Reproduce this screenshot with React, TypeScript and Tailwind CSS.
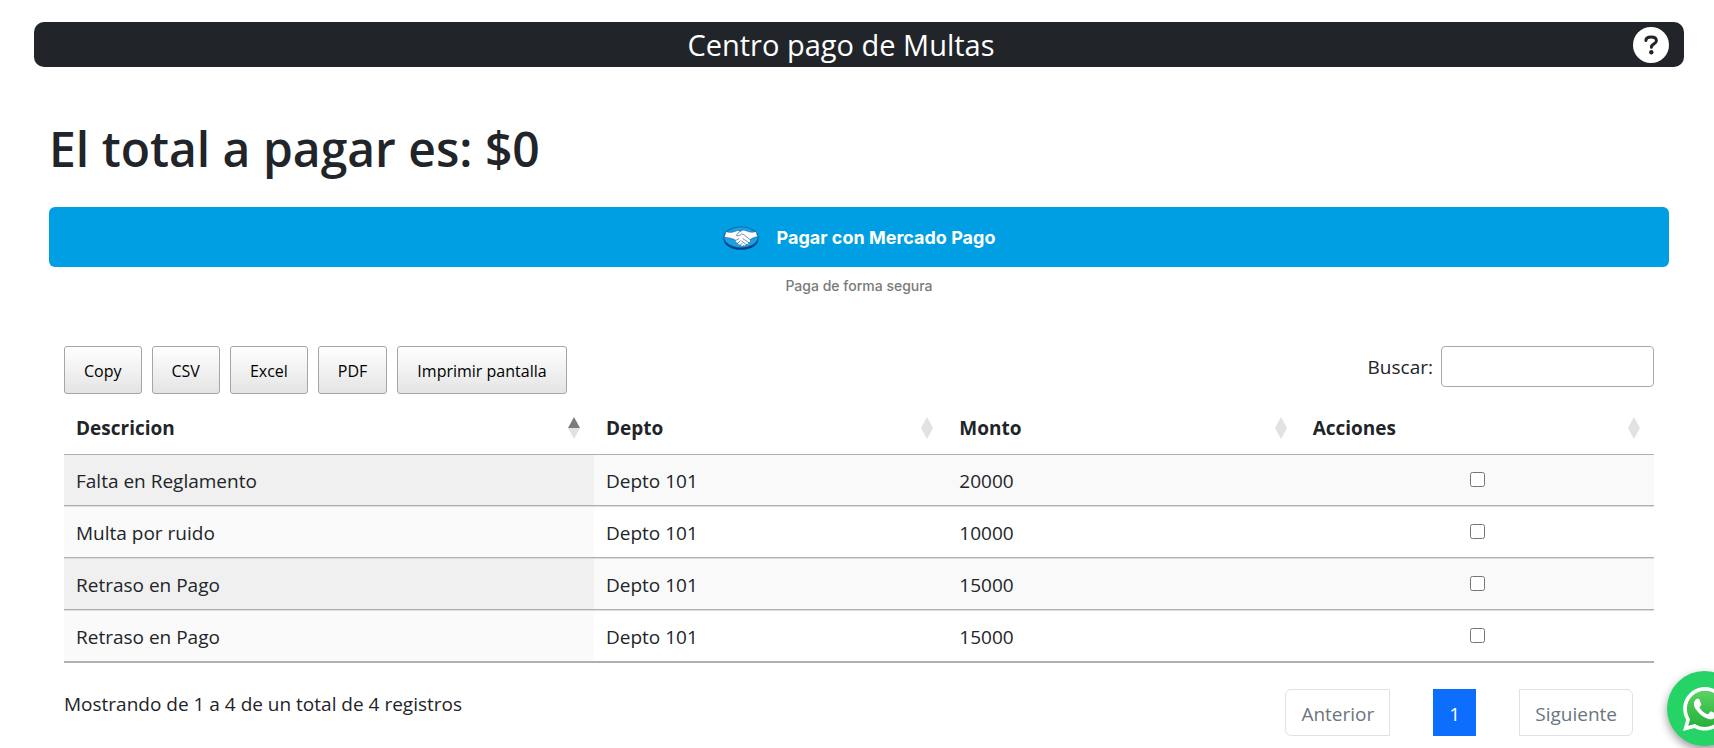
import { useState } from "react";

type Fine = { id: number; description: string; unit: string; amount: number };

const fines: Fine[] = [
  { id: 1, description: "Falta en Reglamento", unit: "Depto 101", amount: 20000 },
  { id: 2, description: "Multa por ruido", unit: "Depto 101", amount: 10000 },
  { id: 3, description: "Retraso en Pago", unit: "Depto 101", amount: 15000 },
  { id: 4, description: "Retraso en Pago", unit: "Depto 101", amount: 15000 },
];

const columns = [
  { label: "Descricion", width: "w-1/3", sorted: true },
  { label: "Depto", width: "w-2/9", sorted: false },
  { label: "Monto", width: "w-2/9", sorted: false },
  { label: "Acciones", width: "w-2/9", sorted: false },
];

const exportActions = ["Copy", "CSV", "Excel", "PDF", "Imprimir pantalla"];

function HandshakeLogo() {
  return (
    <svg className="h-6 w-9" viewBox="0 0 36 24" aria-hidden="true">
      <ellipse cx="18" cy="13" rx="17.4" ry="10.8" fill="#0a3f86" />
      <ellipse cx="18" cy="11.2" rx="17.4" ry="10.8" fill="#1c5a9c" />
      <ellipse cx="18" cy="11.2" rx="16.6" ry="10" fill="#12a5e6" />
      <path
        d="M3 5.400C6 6.800 9.500 6.600 13 4.900c1.600-.6 3-.4 4.500.3 1.600-1.300 3.600-1.500 5.600-.5 3.400 1.600 6.700 2 9.900.7l1.800 5.400c-3.200.3-5.700 1.300-7.700 2.900 1.100 1.200.4 3-1.300 3 .1 1.500-1.200 2.300-2.500 1.900-.3 1.200-1.700 1.700-2.800 1-1 1.200-2.900.7-3.300-.6-1.700.4-3-.7-2.800-2.100-1.900.3-2.900-1.500-1.900-2.800C9 12.400 5.500 11.500 1.200 11.400Z"
        fill="#fff"
        stroke="#2c5f9e"
        strokeWidth=".7"
        strokeLinejoin="round"
      />
      <path
        d="M17.500 5.200c-2 1.200-3.300 2.600-4 4.200 1.700.8 3.700 0 4.900-1.500 1.300.2 2.200.5 3 1.200l5.700 4.600M20 12.700l5.800 4M18.800 15.200l4.500 3.400M13.400 14.100l2.200-1.300M15.200 16.800l2-1.800M17.400 18.900l1.600-1.600"
        fill="none"
        stroke="#2c5f9e"
        strokeWidth=".7"
        strokeLinecap="round"
      />
    </svg>
  );
}

function SortIcon({ ascending }: { ascending: boolean }) {
  return (
    <svg className="h-[22px] w-3 shrink-0" viewBox="0 0 12 22" aria-hidden="true">
      <path d="M6 0 12 11H0Z" fill={ascending ? "#7b7c7f" : "#e2e2e2"} />
      <path d="M0 11H12L6 22Z" fill="#e2e2e2" />
    </svg>
  );
}

function WhatsAppIcon() {
  return (
    <svg className="size-11" viewBox="0 32 448 448" aria-hidden="true">
      <defs>
        <linearGradient id="bubble" x1="0" y1="0" x2="0" y2="1">
          <stop offset="0" stopColor="#5fd367" />
          <stop offset="1" stopColor="#20b038" />
        </linearGradient>
      </defs>
      <path d="M224 50a204 204 0 0 1 0 408c-36 0-70-9-99-26L28 454l26-95C32 328 20 292 20 254A204 204 0 0 1 224 50Z" fill="url(#bubble)" />
      <path
        fill="#fff"
        d="M380.9 97.1C339 55.1 283.2 32 223.9 32c-122.4 0-222 99.6-222 222 0 39.1 10.2 77.3 29.6 111L0 480l117.7-30.9c32.4 17.7 68.9 27 106.1 27h.1c122.3 0 224.1-99.6 224.1-222 0-59.3-25.2-115-67.1-157zm-157 341.6c-33.2 0-65.7-8.9-94-25.700l-6.700-4-69.800 18.300L72 359.200l-4.400-7c-18.500-29.400-28.200-63.300-28.200-98.200 0-101.700 82.800-184.500 184.600-184.500 49.300 0 95.600 19.200 130.400 54.100 34.800 34.900 56.200 81.200 56.100 130.500 0 101.800-84.900 184.600-186.600 184.600zm101.200-138.200c-5.500-2.800-32.800-16.200-37.900-18-5.100-1.900-8.800-2.800-12.500 2.800-3.700 5.600-14.300 18-17.600 21.800-3.200 3.700-6.500 4.200-12 1.400-32.600-16.300-54-29.100-75.500-66-5.700-9.800 5.700-9.100 16.300-30.300 1.800-3.700.9-6.900-.5-9.700-1.400-2.800-12.500-30.100-17.100-41.200-4.500-10.800-9.100-9.300-12.500-9.500-3.200-.2-6.900-.2-10.600-.2-3.700 0-9.700 1.400-14.800 6.900-5.100 5.600-19.400 19-19.400 46.300 0 27.300 19.900 53.700 22.600 57.400 2.800 3.700 39.100 59.700 94.800 83.800 35.200 15.200 49 16.500 66.600 13.900 10.700-1.600 32.800-13.400 37.400-26.400 4.600-13 4.600-24.100 3.200-26.400-1.300-2.500-5-3.900-10.500-6.600z"
      />
    </svg>
  );
}

export default function App() {
  const [search, setSearch] = useState("");
  const [selected, setSelected] = useState<number[]>([]);

  const toggle = (id: number) =>
    setSelected((ids) => (ids.includes(id) ? ids.filter((i) => i !== id) : [...ids, id]));

  const total = fines.filter((f) => selected.includes(f.id)).reduce((sum, f) => sum + f.amount, 0);
  const rows = fines.filter((f) => f.description.toLowerCase().includes(search.toLowerCase()));

  return (
    <div className="bg-white pt-[22px] pr-[30px] pl-[34px] font-['Open_Sans','Noto_Sans',sans-serif] text-[19px] leading-7 text-[#212529]">
      <header className="flex h-[45px] items-center rounded-[10px] bg-[#212529] px-[15px] text-white">
        <div className="flex-1 text-center text-[29px] leading-10">Centro pago de Multas</div>
        <button
          type="button"
          aria-label="Ayuda"
          className="flex size-9 items-center justify-center rounded-full bg-white"
        >
          <svg className="size-5" viewBox="0 0 20 20" aria-hidden="true">
            <path
              d="M4.900 5.600C4.900 2.900 6.700 2 10.200 2c3.300 0 5.200 1.200 5.200 3.700 0 3.500-5 2.900-5 6.500"
              fill="none"
              stroke="#212529"
              strokeWidth="3"
              strokeLinecap="round"
            />
            <circle cx="10.300" cy="17.200" r="2.200" fill="#212529" />
          </svg>
        </button>
      </header>

      <main className="px-[15px] pt-[49px]">
        <h1 className="text-5xl leading-[66px] font-semibold">El total a pagar es: ${total}</h1>

        <button
          type="button"
          className="mt-[25px] flex h-[60px] w-full items-center justify-center gap-[18px] rounded-md bg-[#009ee3] pt-px font-['Inter',sans-serif] text-lg font-bold text-white"
        >
          <HandshakeLogo />
          Pagar con Mercado Pago
        </button>
        <p className="mt-[7px] text-center font-['Inter',sans-serif] text-sm leading-6 font-medium text-[#7a7a7a]">
          Paga de forma segura
        </p>

        <section className="px-[15px] pt-12">
          <div className="flex items-start justify-between">
            <div className="flex gap-2.5">
              {exportActions.map((action) => (
                <button
                  key={action}
                  type="button"
                  className="h-12 rounded-[3px] border border-[#a5a5a5] bg-linear-to-b from-white to-[#e4e4e4] px-[19px] pt-0.5 text-base text-black"
                >
                  {action}
                </button>
              ))}
            </div>
            <label className="flex items-center gap-2">
              Buscar:
              <input
                type="search"
                value={search}
                onChange={(e) => setSearch(e.target.value)}
                className="h-[41px] w-[213px] rounded-[4px] border border-[#aaa] bg-transparent px-2"
              />
            </label>
          </div>

          <table className="mt-[7px] w-full table-fixed border-separate border-spacing-0 border-b border-[#b0b0b0] text-left">
            <thead>
              <tr>
                {columns.map((column) => (
                  <th
                    key={column.label}
                    scope="col"
                    className={`${column.width} h-[54px] border-b border-[#b0b0b0] pr-[14px] pl-3 font-bold`}
                  >
                    <span className="flex items-center justify-between">
                      {column.label}
                      <SortIcon ascending={column.sorted} />
                    </span>
                  </th>
                ))}
              </tr>
            </thead>
            <tbody>
              {rows.map((fine) => (
                <tr
                  key={fine.id}
                  className="odd:bg-[#f9f9f9] *:h-[52px] *:border-t *:border-b *:border-t-[#ddd] *:border-b-[#b0b0b0] *:px-3 *:pt-0.5 first:*:h-[51px] first:*:border-t-0 odd:*:first:bg-[#f0f0f0] even:*:first:bg-[#fafafa]"
                >
                  <td>{fine.description}</td>
                  <td>{fine.unit}</td>
                  <td>{fine.amount}</td>
                  <td>
                    <input
                      type="checkbox"
                      aria-label={`Seleccionar ${fine.description}`}
                      checked={selected.includes(fine.id)}
                      onChange={() => toggle(fine.id)}
                      className="mx-auto mb-1 block size-[15px]"
                    />
                  </td>
                </tr>
              ))}
            </tbody>
          </table>

          <footer className="flex items-start justify-between pt-[26px] pr-[21px]">
            <p className="pt-px">Mostrando de 1 a 4 de un total de 4 registros</p>
            <nav aria-label="Paginación" className="flex gap-[43px]">
              <button type="button" className="h-[47px] rounded-l-md border border-[#dee2e6] px-[15px] pt-0.5 text-[#6c757d]">
                Anterior
              </button>
              <button type="button" aria-current="page" className="h-[47px] w-[43px] bg-[#0d6efd] pt-0.5 text-white">
                1
              </button>
              <button type="button" className="h-[47px] rounded-r-md border border-[#dee2e6] px-[15px] pt-0.5 text-[#6c757d]">
                Siguiente
              </button>
            </nav>
          </footer>
        </section>
      </main>

      <a
        href="#whatsapp"
        aria-label="WhatsApp"
        className="fixed -right-7 bottom-0.5 flex size-[75px] items-center justify-center rounded-full bg-[#25d366] shadow-[0_4px_10px_rgba(0,0,0,0.4)]"
      >
        <WhatsAppIcon />
      </a>
    </div>
  );
}
